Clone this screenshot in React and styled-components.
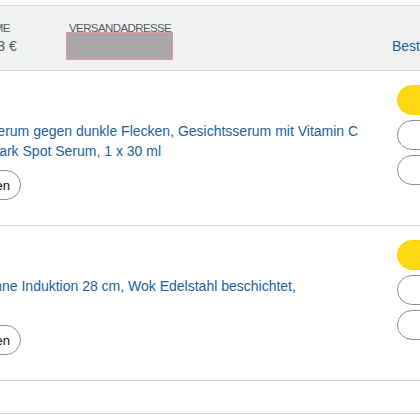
import * as React from 'react'
import styled, { createGlobalStyle } from 'styled-components'
import { RefreshCw } from 'lucide-react'

const GlobalStyle = createGlobalStyle`
  html, body {
    margin: 0;
    padding: 0;
    background: #ffffff;
    overflow: hidden;
  }
  body {
    font-family: "Liberation Sans", Arial, sans-serif;
    color: #0F1111;
  }
`

const Viewport = styled.div`
  width: 420px;
  height: 420px;
  padding-top: 5px;
  box-sizing: border-box;
  overflow: hidden;
`

const OrderCard = styled.section`
  width: 892px;
  margin-left: -248px;
  border: 1px solid #D5D9D9;
  border-radius: 8px;
  overflow: hidden;
  background: #ffffff;
`

const OrderHeader = styled.header`
  display: flex;
  align-items: flex-start;
  padding: 14px 18px;
  background: #F0F2F2;
  border-bottom: 1px solid #D5D9D9;
`

const HeaderCol = styled.div`
  position: relative;
  flex: 0 0 ${p => p.$width ? `${p.$width}px` : 'auto'};
  display: flex;
  flex-direction: column;
  align-items: ${p => p.$right ? 'flex-end' : 'flex-start'};
`

const HeaderLabel = styled.span`
  display: block;
  font-size: 11.5px;
  line-height: 16px;
  letter-spacing: -0.6px;
  text-transform: uppercase;
  color: #565959;
  white-space: nowrap;
`

const HeaderValue = styled.span`
  display: block;
  font-size: 14px;
  line-height: 20px;
  color: #565959;
  white-space: nowrap;
`

const HeaderLinks = styled.div`
  display: flex;
  align-items: center;
  gap: 10px;
  font-size: 14px;
  line-height: 20px;
  white-space: nowrap;
`

const Link = styled.a`
  color: #2162A1;
  text-decoration: none;
  cursor: pointer;
`

const Divider = styled.span`
  width: 1px;
  height: 14px;
  background: #D5D9D9;
`

const Redacted = styled.div`
  position: absolute;
  left: -3px;
  top: 12px;
  width: 107px;
  height: 28px;
  box-sizing: border-box;
  background: #A8A8AB;
  border: 1px solid #E49A9A;
`

const Shipment = styled.div`
  display: flex;
  align-items: flex-start;
  gap: 25px;
  padding: 14px 18px;
  border-bottom: 1px solid #D5D9D9;
`

const ShipmentMain = styled.div`
  flex: 0 0 601px;
`

const StatusHeading = styled.h3`
  margin: 0 0 12px;
  font-size: 18px;
  line-height: 24px;
  font-weight: 700;
  color: #0F1111;
  white-space: nowrap;
`

const Item = styled.div`
  display: flex;
  align-items: flex-start;
`

const Thumb = styled.div`
  flex: 0 0 90px;
  height: 90px;
  margin-right: 16px;
  border-radius: 4px;
  background: #F3F3F3;
`

const ItemInfo = styled.div`
  flex: 0 0 495px;
`

const ItemTitle = styled(Link)`
  display: block;
  font-size: 14px;
  line-height: 20px;
`

const PillButton = styled.button`
  display: inline-flex;
  align-items: center;
  justify-content: center;
  box-sizing: border-box;
  height: 30px;
  border-radius: 100px;
  font-family: inherit;
  font-size: 13px;
  color: #0F1111;
  white-space: nowrap;
  cursor: pointer;
  background: ${p => p.$primary ? '#FFD814' : '#FFFFFF'};
  border: 1px solid ${p => p.$primary ? '#FCD200' : '#8D9096'};
`

const BuyAgain = styled(PillButton)`
  margin-top: 9px;
  padding: 0 10px 0 21px;
  gap: 12px;
`

const Actions = styled.div`
  flex: 0 0 230px;
  display: flex;
  flex-direction: column;
  gap: 5px;

  & > ${PillButton} {
    width: 100%;
    padding: 0 10px;
  }
`

const CardFooter = styled.footer`
  padding: 6px 18px;
  font-size: 14px;
  line-height: 20px;
`

const shipments = [
  {
    status: 'Zugestellt: 5. März',
    title:
      'Lavera Vitamin C Serum gegen dunkle Flecken, Gesichtsserum mit Vitamin C und Niacinamide, Dark Spot Serum, 1 x 30 ml',
    actions: ['Lieferung verfolgen', 'Artikel zurücksenden', 'Produktbewertung schreiben']
  },
  {
    status: 'Zugestellt: 28. Februar',
    title:
      'WMF Profi Wokpfanne Induktion 28 cm, Wok Edelstahl beschichtet, Antihaftpfanne',
    actions: ['Lieferung verfolgen', 'Artikel zurücksenden', 'Produktbewertung schreiben']
  }
]

function ShipmentRow ({ status, title, actions }) {
  return (
    <Shipment>
      <ShipmentMain>
        <StatusHeading>{status}</StatusHeading>
        <Item>
          <Thumb />
          <ItemInfo>
            <ItemTitle>{title}</ItemTitle>
            <BuyAgain>
              <RefreshCw size={18} strokeWidth={2} />
              Erneut kaufen
            </BuyAgain>
          </ItemInfo>
        </Item>
      </ShipmentMain>
      <Actions>
        {actions.map((label, i) => (
          <PillButton key={label} $primary={i === 0}>{label}</PillButton>
        ))}
      </Actions>
    </Shipment>
  )
}

export default function App () {
  return (
    <Viewport>
      <GlobalStyle />
      <OrderCard>
        <OrderHeader>
          <HeaderCol $width={199}>
            <HeaderLabel>Bestellung aufgegeben</HeaderLabel>
            <HeaderValue>3. März 2024</HeaderValue>
          </HeaderCol>
          <HeaderCol $width={99}>
            <HeaderLabel>Summe</HeaderLabel>
            <HeaderValue>23,93 €</HeaderValue>
          </HeaderCol>
          <HeaderCol $width={323}>
            <HeaderLabel>Versandadresse</HeaderLabel>
            <HeaderValue><Link>Max Muster</Link></HeaderValue>
            <Redacted />
          </HeaderCol>
          <HeaderCol $right>
            <HeaderLabel>Bestellnr. 028-1234567-1234567</HeaderLabel>
            <HeaderLinks>
              <Link>Bestelldetails anzeigen</Link>
              <Divider />
              <Link>Rechnung</Link>
            </HeaderLinks>
          </HeaderCol>
        </OrderHeader>
        {shipments.map(s => <ShipmentRow key={s.status} {...s} />)}
        <CardFooter>
          <Link>Bestellung archivieren</Link>
        </CardFooter>
      </OrderCard>
    </Viewport>
  )
}
